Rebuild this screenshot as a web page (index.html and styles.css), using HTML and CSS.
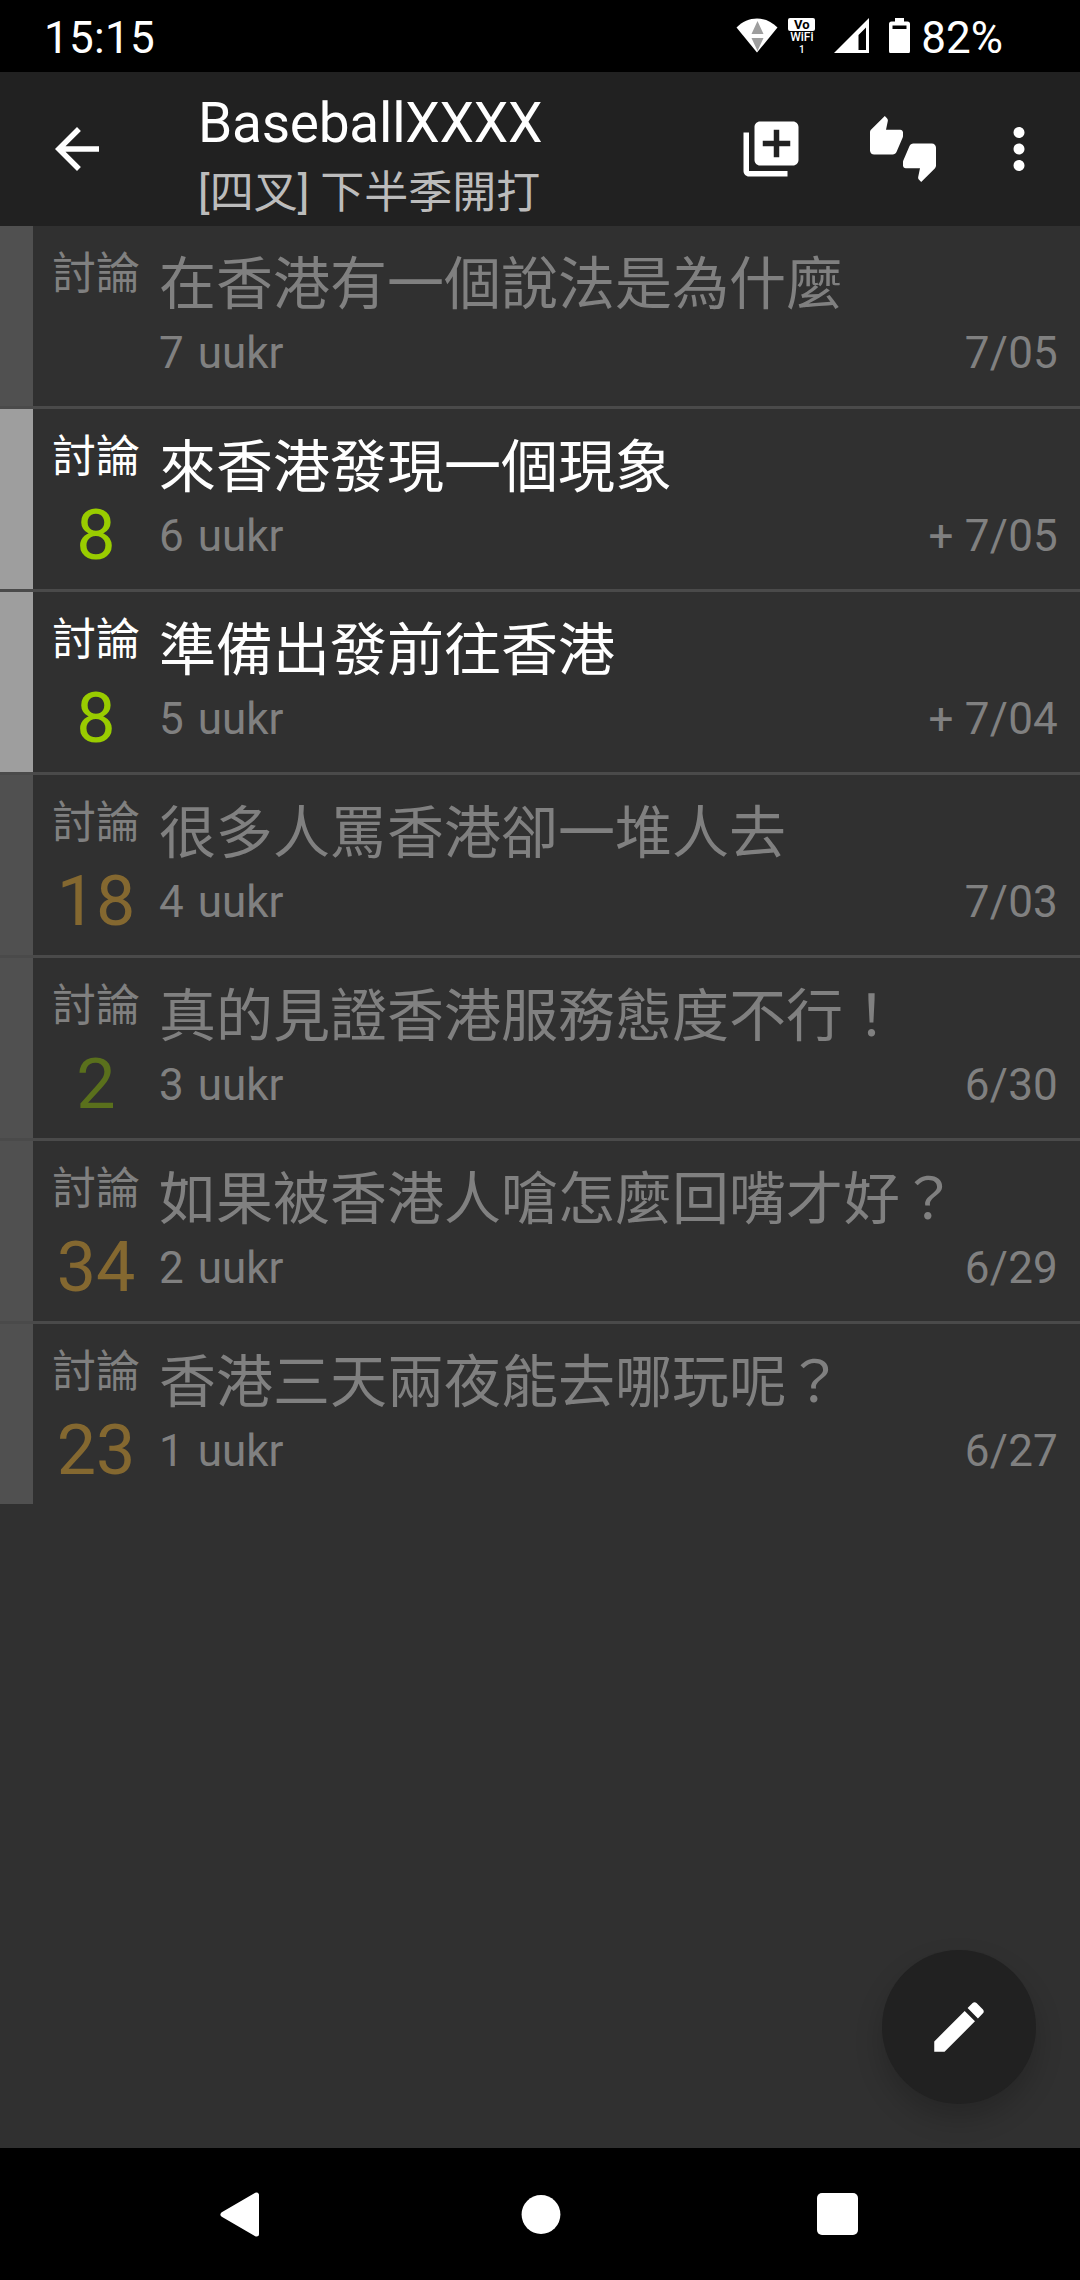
FILE: index.html
```html
<!DOCTYPE html>
<html lang="zh-Hant">
<head>
<meta charset="utf-8">
<title>BaseballXXXX</title>
<link rel="stylesheet" href="styles.css">
</head>
<body>
<div class="screen">
  <div class="status">
    <span class="clock">15:15</span>
    <div class="status-icons">
      <svg class="wifi" width="42" height="36" viewBox="0 0 42 36"><path fill="#fff" d="M0.5 9.5C12-2.5 30-2.5 41.500 9.500L21 34.500Z"/><path fill="#9e9e9e" d="M21.500 3l6 13h-12zM15.500 20h12l-6 13z"/></svg>
      <div class="vowifi"><span class="vo">Vo</span><span class="wf">WiFi</span><span class="sim">1</span></div>
      <svg class="signal" width="35" height="35" viewBox="0 0 35 35"><path fill="#fff" fill-rule="evenodd" d="M35 0v35H0zM32 9.500l-7.500 7.500v15h7.500z"/></svg>
      <svg class="battery" width="21" height="35" viewBox="0 0 21 35"><path fill="#fff" fill-rule="evenodd" d="M6 0h9v3.500h3.500a2.500 2.500 0 0 1 2.500 2.500v27a2.500 2.500 0 0 1-2.500 2.500h-16a2.500 2.500 0 0 1-2.500-2.500v-27a2.500 2.500 0 0 1 2.500-2.500H6zM3.500 7.500v3.500h14V7.500z"/></svg>
      <span class="percent">82%</span>
    </div>
  </div>
  <header class="appbar">
    <svg class="icon" viewBox="0 0 24 24"><path d="M20 11H7.830l5.590-5.590L12 4l-8 8 8 8 1.410-1.410L7.830 13H20v-2z"/></svg>
    <div class="heading">
      <h1>BaseballXXXX</h1>
      <p>[四叉] 下半季開打</p>
    </div>
    <div class="actions">
      <svg class="icon" viewBox="0 0 24 24"><path d="M4 6H2v14c0 1.100.9 2 2 2h14v-2H4V6zm16-4H8c-1.100 0-2 .9-2 2v12c0 1.100.9 2 2 2h12c1.100 0 2-.9 2-2V4c0-1.100-.9-2-2-2zm-1 9h-4v4h-2v-4H9V9h4V5h2v4h4v2z"/></svg>
      <svg class="icon" viewBox="0 0 24 24"><path d="M12 6c0-.55-.45-1-1-1H5.820l.66-3.180.02-.23c0-.31-.13-.59-.33-.8L5.380 0 .44 4.940C.17 5.210 0 5.590 0 6v6.500c0 .83.67 1.500 1.500 1.500h6.750c.62 0 1.150-.38 1.380-.91l2.260-5.290c.07-.17.11-.36.11-.55V6zm10.500 4h-6.750c-.62 0-1.150.38-1.380.91l-2.260 5.290c-.07.17-.11.36-.11.55V18c0 .55.45 1 1 1h5.180l-.66 3.180-.02.24c0 .31.13.59.33.8l.79.78 4.940-4.940c.27-.27.44-.65.44-1.060v-6.500c0-.83-.67-1.500-1.500-1.500z"/></svg>
      <svg class="icon more" viewBox="0 0 24 24"><path d="M12 8c1.100 0 2-.9 2-2s-.9-2-2-2-2 .9-2 2 .9 2 2 2zm0 2c-1.100 0-2 .9-2 2s.9 2 2 2 2-.9 2-2-.9-2-2-2zm0 6c-1.100 0-2 .9-2 2s.9 2 2 2 2-.9 2-2-.9-2-2-2z"/></svg>
    </div>
  </header>
  <main class="list">
    <article class="row read"><i class="mark"></i><div class="tag"><span class="kind">討論</span><b class="count"></b></div><div class="body"><h2>在香港有一個說法是為什麼</h2><div class="meta"><span class="author">7 uukr</span><span class="date">7/05</span></div></div></article>
    <article class="row"><i class="mark"></i><div class="tag"><span class="kind">討論</span><b class="count low">8</b></div><div class="body"><h2>來香港發現一個現象</h2><div class="meta"><span class="author">6 uukr</span><span class="date">+ 7/05</span></div></div></article>
    <article class="row"><i class="mark"></i><div class="tag"><span class="kind">討論</span><b class="count low">8</b></div><div class="body"><h2>準備出發前往香港</h2><div class="meta"><span class="author">5 uukr</span><span class="date">+ 7/04</span></div></div></article>
    <article class="row read"><i class="mark"></i><div class="tag"><span class="kind">討論</span><b class="count high">18</b></div><div class="body"><h2>很多人罵香港卻一堆人去</h2><div class="meta"><span class="author">4 uukr</span><span class="date">7/03</span></div></div></article>
    <article class="row read"><i class="mark"></i><div class="tag"><span class="kind">討論</span><b class="count low">2</b></div><div class="body"><h2>真的見證香港服務態度不行！</h2><div class="meta"><span class="author">3 uukr</span><span class="date">6/30</span></div></div></article>
    <article class="row read"><i class="mark"></i><div class="tag"><span class="kind">討論</span><b class="count high">34</b></div><div class="body"><h2>如果被香港人嗆怎麼回嘴才好？</h2><div class="meta"><span class="author">2 uukr</span><span class="date">6/29</span></div></div></article>
    <article class="row read"><i class="mark"></i><div class="tag"><span class="kind">討論</span><b class="count high">23</b></div><div class="body"><h2>香港三天兩夜能去哪玩呢？</h2><div class="meta"><span class="author">1 uukr</span><span class="date">6/27</span></div></div></article>
  </main>
  <button class="fab" aria-label="新增"><svg class="icon" viewBox="0 0 24 24"><path d="M3 17.250V21h3.750L17.810 9.940l-3.750-3.750L3 17.250zM20.710 7.040c.39-.39.39-1.020 0-1.410l-2.340-2.340c-.39-.39-1.020-.39-1.410 0l-1.830 1.830 3.750 3.750 1.830-1.830z"/></svg></button>
  <nav class="navbar">
    <svg width="40" height="46" viewBox="0 0 40 46"><path fill="#fff" stroke="#fff" stroke-width="5" stroke-linejoin="round" d="M3 23.500L36.500 4V43Z"/></svg>
    <svg class="home" width="40" height="40" viewBox="0 0 40 40"><circle cx="20" cy="20.500" r="19.400" fill="#fff"/></svg>
    <svg width="41" height="42" viewBox="0 0 41 42"><rect width="41" height="42" rx="5" fill="#fff"/></svg>
  </nav>
</div>
</body>
</html>
```
FILE: styles.css
```css
* { box-sizing: border-box; }
body {
  margin: 0;
  background: #303030;
  color: #fff;
  font-family: Roboto, "Noto Sans CJK TC", sans-serif;
}
.screen {
  position: relative;
  width: 1080px;
  height: 2280px;
  display: flex;
  flex-direction: column;
  overflow: hidden;
}
.status {
  height: 72px;
  background: #000;
  display: flex;
  justify-content: space-between;
  padding: 0 77px 0 44px;
  font-size: 44px;
  line-height: 76px;
}
.clock { letter-spacing: .3px; }
.status-icons { display: flex; }
.wifi { margin-top: 18px; }
.vowifi {
  width: 27px;
  margin: 18px 0 0 10px;
  display: flex;
  flex-direction: column;
  align-items: center;
}
.vo {
  width: 27px;
  height: 13px;
  border-radius: 2px;
  background: #fff;
  color: #000;
  font: 700 13px/14px Roboto, sans-serif;
  text-align: center;
}
.wf { font: 500 12px/13px Roboto, sans-serif; }
.sim { font: 500 10px/11px Roboto, sans-serif; }
.signal { margin: 18px 0 0 19px; }
.battery { margin: 18px 0 0 20px; }
.percent { margin-left: 11px; }
.appbar {
  height: 154px;
  background: #212121;
  display: flex;
  align-items: center;
  padding: 0 28px 0 44px;
}
.icon { width: 66px; height: 66px; fill: #fff; display: block; }
.heading { margin-left: 88px; flex: 1; height: 154px; padding-top: 19px; }
h1, h2, p { margin: 0; font-weight: 400; white-space: nowrap; }
h1 { font-size: 55px; line-height: 64px; letter-spacing: -.25px; }
.heading p { color: #bcbcbc; font-size: 44px; line-height: 76px; }
.actions { display: flex; gap: 66px; }
.more { margin-left: -16px; }
.row {
  display: flex;
  height: 183px;
  border-bottom: 3px solid #4a4a4a;
}
.row:last-child { height: 180px; border-bottom: 0; }
.mark { width: 33px; background: #9e9e9e; }
.tag {
  width: 126px;
  display: flex;
  flex-direction: column;
  align-items: center;
}
.kind { font-size: 44px; line-height: 64px; margin-top: 16px; }
.count { font-size: 70px; line-height: 82px; font-weight: 400; margin-top: 5px; }
.low { color: #9c0; }
.high { color: #fb3; }
.body { flex: 1; padding: 17px 22px 0 0; }
h2 { font-size: 57px; line-height: 84px; }
.meta {
  display: flex;
  justify-content: space-between;
  color: #808080;
  font-size: 44px;
  line-height: 52px;
}
.author { word-spacing: 3px; }
.date { letter-spacing: .2px; }
.read .mark { background: #505050; }
.read .kind, .read h2 { color: #808080; }
.read .low { color: #5a701c; }
.read .high { color: #846830; }
.fab {
  position: absolute;
  right: 44px;
  bottom: 176px;
  width: 154px;
  height: 154px;
  padding: 0;
  border: 0;
  border-radius: 50%;
  background: #212121;
  display: flex;
  align-items: center;
  justify-content: center;
  box-shadow: 0 14px 28px rgba(0, 0, 0, .2);
}
.navbar {
  margin-top: auto;
  height: 132px;
  background: #000;
  display: flex;
  align-items: center;
  justify-content: space-between;
  padding: 0 222px 0 220px;
}
.home { margin-left: 4px; }
```
